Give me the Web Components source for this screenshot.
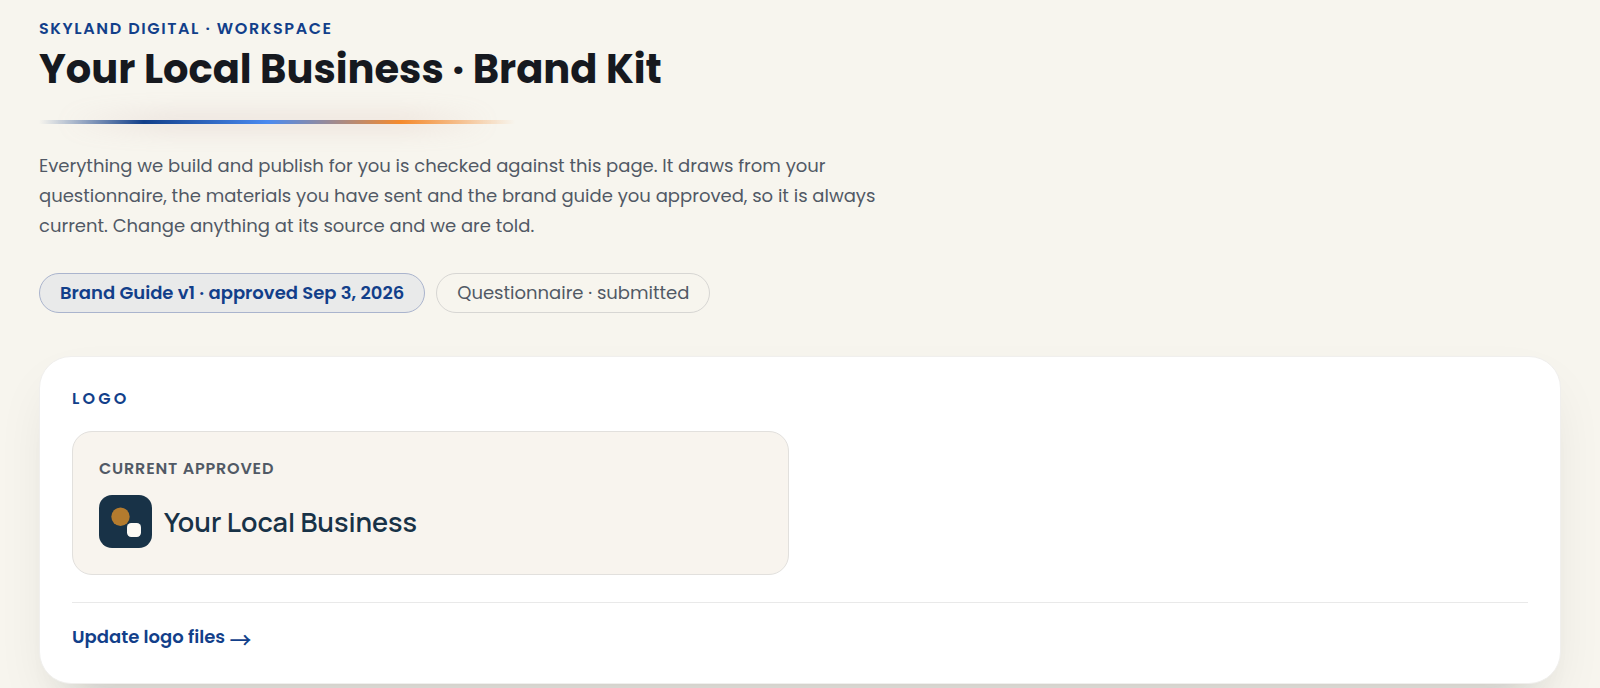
<!DOCTYPE html>
<html lang="en">
<head>
<meta charset="utf-8">
<meta name="viewport" content="width=device-width, initial-scale=1">
<title>Your Local Business · Brand Kit</title>
<style>
  :root {
    --paper: #f7f5ee;
    --ink: #16191f;
    --muted: #515965;
    --blue: #123f8a;
  }
  body {
    margin: 0;
    background: var(--paper);
    color: var(--ink);
    font-family: Poppins, Inter, "Open Sans", sans-serif;
  }
  .arrow { font: 500 22px/1 "Noto Sans CJK SC", sans-serif; vertical-align: middle; }
</style>
</head>
<body>
<brand-kit-page>
  <page-header slot="header" eyebrow="Skyland Digital · Workspace" heading="Your Local Business · Brand Kit">
    Everything we build and publish for you is checked against this page. It draws from your questionnaire, the materials you have sent and the brand guide you approved, so it is always current. Change anything at its source and we are told.
  </page-header>
  <status-pill slot="status" active>Brand Guide v1 · approved Sep 3, 2026</status-pill>
  <status-pill slot="status">Questionnaire · submitted</status-pill>
  <kit-card heading="Logo">
    <logo-tile label="Current approved" name="Your Local Business"></logo-tile>
    <a slot="action" href="#logo-files">Update logo files <span class="arrow">→</span></a>
  </kit-card>
</brand-kit-page>

<script>
class BrandKitPage extends HTMLElement {
  constructor() {
    super();
    this.attachShadow({ mode: "open" }).innerHTML = `
      <style>
        :host { display: block; padding: 16px 39px 5px; }
        .status { display: flex; flex-wrap: wrap; gap: 11px; margin: 32px 0 43px; }
      </style>
      <main>
        <slot name="header"></slot>
        <div class="status"><slot name="status"></slot></div>
        <slot></slot>
      </main>`;
  }
}

class PageHeader extends HTMLElement {
  constructor() {
    super();
    this.attachShadow({ mode: "open" }).innerHTML = `
      <style>
        :host { display: block; }
        .eyebrow {
          margin: 0; font-size: 16px; line-height: 26px; font-weight: 600;
          letter-spacing: .1em; text-transform: uppercase; color: var(--blue);
        }
        h1 { margin: 0; font-size: 40px; line-height: 54px; font-weight: 700; }
        p.lead {
          max-width: 870px; margin: 27px 0 0;
          font-size: 18px; line-height: 30px; color: var(--muted);
        }
      </style>
      <header>
        <p class="eyebrow"></p>
        <h1></h1>
        <glow-rule></glow-rule>
        <p class="lead"><slot></slot></p>
      </header>`;
  }
  connectedCallback() {
    this.shadowRoot.querySelector(".eyebrow").textContent = this.getAttribute("eyebrow");
    this.shadowRoot.querySelector("h1").textContent = this.getAttribute("heading");
  }
}

class GlowRule extends HTMLElement {
  constructor() {
    super();
    this.attachShadow({ mode: "open" }).innerHTML = `
      <style>
        :host {
          display: block; position: relative; max-width: 476px; height: 4px; margin-top: 24px;
          background: linear-gradient(90deg, transparent, #123f8a 22%, #4a8af0 48%, #f58a2c 76%, transparent);
        }
        :host::before {
          content: ""; position: absolute; inset: -10px 20px; z-index: -1;
          background: linear-gradient(90deg, transparent, #b88f90 25%, #c8968a 80%, transparent);
          filter: blur(10px); opacity: .14;
        }
      </style>`;
  }
}

class StatusPill extends HTMLElement {
  constructor() {
    super();
    this.attachShadow({ mode: "open" }).innerHTML = `
      <style>
        :host {
          display: block; box-sizing: border-box; padding: 4px 20px;
          border: 1px solid #d7d6d3; border-radius: 20px;
          font-size: 18px; line-height: 30px; color: var(--muted);
        }
        :host([active]) {
          border-color: #aab4cd; background: #e9eaea; color: var(--blue); font-weight: 600;
        }
      </style>
      <slot></slot>`;
  }
}

class KitCard extends HTMLElement {
  constructor() {
    super();
    this.attachShadow({ mode: "open" }).innerHTML = `
      <style>
        :host {
          display: block; padding: 29px 32px 31px; border: 1px solid #f0efed; border-radius: 32px;
          background: #fff;
          box-shadow: 0 40px 40px -36px rgba(22, 25, 31, .16), 0 24px 56px -14px rgba(22, 25, 31, .1);
        }
        h2 {
          margin: 0 0 19px; font-size: 16px; line-height: 26px; font-weight: 600;
          letter-spacing: .2em; text-transform: uppercase; color: var(--blue);
        }
        .grid { display: grid; grid-template-columns: 1fr 1fr; gap: 22px; }
        footer {
          margin-top: 27px; padding-top: 19px; border-top: 1px solid #e9e9e9;
          font-size: 18px; line-height: 30px; font-weight: 600;
        }
        ::slotted(a) { color: var(--blue); text-decoration: none; }
      </style>
      <section>
        <h2></h2>
        <div class="grid"><slot></slot></div>
        <footer><slot name="action"></slot></footer>
      </section>`;
  }
  connectedCallback() {
    this.shadowRoot.querySelector("h2").textContent = this.getAttribute("heading");
  }
}

class LogoTile extends HTMLElement {
  constructor() {
    super();
    this.attachShadow({ mode: "open" }).innerHTML = `
      <style>
        :host {
          display: block; padding: 24px 26px 26px; border: 1px solid #e2e0dd; border-radius: 20px;
          background: #f8f4ee;
        }
        .label {
          margin: 0 0 13px; font-size: 16px; line-height: 26px; font-weight: 600;
          letter-spacing: .05em; text-transform: uppercase; color: var(--muted);
        }
        .logo { display: flex; align-items: center; gap: 12px; }
        svg { display: block; flex: none; }
        .name { font-family: Manrope, Inter, sans-serif; font-size: 27px; line-height: 40px; font-weight: 600; color: #183247; }
      </style>
      <p class="label"></p>
      <div class="logo">
        <svg width="53" height="53" viewBox="0 0 53 53" aria-hidden="true">
          <rect width="53" height="53" rx="13" fill="#183247"/>
          <circle cx="21.5" cy="21.7" r="9.2" fill="#b47b2e"/>
          <rect x="28" y="28" width="14" height="14" rx="4.2" fill="#fbf9f4"/>
        </svg>
        <span class="name"></span>
      </div>`;
  }
  connectedCallback() {
    this.shadowRoot.querySelector(".label").textContent = this.getAttribute("label");
    this.shadowRoot.querySelector(".name").textContent = this.getAttribute("name");
  }
}

customElements.define("glow-rule", GlowRule);
customElements.define("page-header", PageHeader);
customElements.define("status-pill", StatusPill);
customElements.define("logo-tile", LogoTile);
customElements.define("kit-card", KitCard);
customElements.define("brand-kit-page", BrandKitPage);
</script>
</body>
</html>
